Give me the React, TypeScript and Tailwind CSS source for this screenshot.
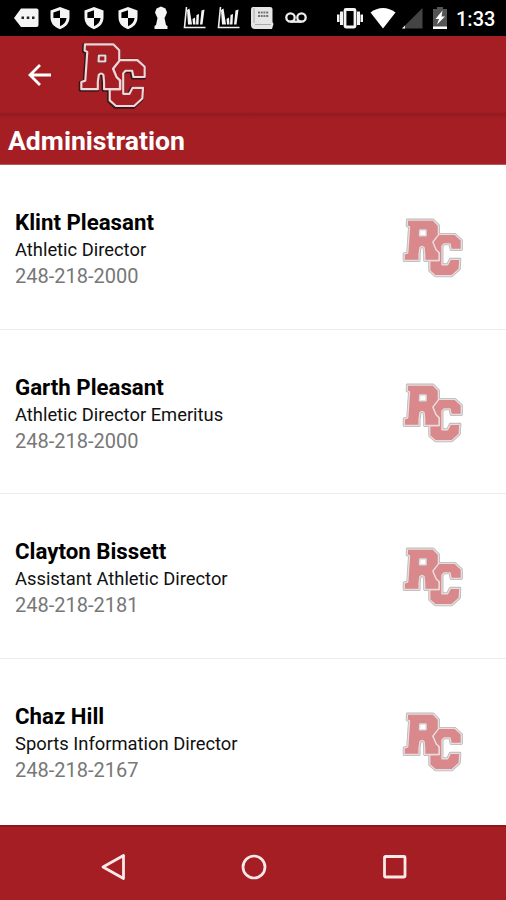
import type { ReactNode } from "react";

const R_PATH =
  "M45 24H131L149 42V74L130 98L141 124L151 134V160H103V140L101 117Q94 108 87 117L84 138V160H34V138L46 134L52 47L44 43Z";
const R_HOLE = "M87 58H107V76H86Z";
const C_PATH =
  "M150 72H204L226 92V123H192L188 104H168L161 112V174H180L189 156H221L219 188L194 211H139L120 194V160H152V134L141 124L130 98Z";

function Logo({ size, fill, line, edge, edgeWidth, lineWidth, dark }: { size: number; fill: string; line: string; edge: string; edgeWidth: number; lineWidth: number; dark?: boolean }) {
  const d = C_PATH + R_PATH;
  return (
    <svg width={size} height={size} viewBox="30 18 200 198" className="block shrink-0 overflow-visible">
      <g strokeLinejoin="round">
        <path d={d} fill={edge} stroke={edge} strokeWidth={edgeWidth} transform={dark ? "translate(-2 2)" : undefined} />
        <path d={C_PATH} fill={fill} stroke={line} strokeWidth={lineWidth} />
        <path d={R_PATH} fill={fill} stroke={line} strokeWidth={lineWidth} />
        <path d={R_HOLE} fill={dark ? fill : "#fff"} stroke={edge} strokeWidth={lineWidth + 3} />
        <path d={R_HOLE} fill={dark ? fill : "#fff"} stroke={line} strokeWidth={lineWidth} />
      </g>
    </svg>
  );
}

function Glyph({ w, className, children }: { w: number; className?: string; children: ReactNode }) {
  return (
    <svg width={w} height={24} viewBox={`0 0 ${w} 24`} className={`shrink-0 ${className ?? ""}`} fill="#f5f5f5">
      {children}
    </svg>
  );
}

function Shield({ className }: { className: string }) {
  return (
    <Glyph w={20} className={className}>
      <path d="M10 1L19.5 4.6V11C19.5 17 16 21.3 10 23.2C4 21.3.5 17 .5 11V4.6Z" />
      <path d="M10 4.2V12H3.4V6.6ZM10 12H16.6C16 16 14 18.700 10 20.200Z" fill="#000" />
    </Glyph>
  );
}

function Chart({ className }: { className: string }) {
  return (
    <Glyph w={23} className={className}>
      <path d="M3.500 1L1.500 21.500H22.500" fill="none" stroke="#eee" strokeWidth="1.600" />
      <path d="M4 4L6.500 2.500L9 18.500H5ZM9.500 13L12 11.500L12.500 18.500H10ZM13.500 9L16 8L15.500 18.500H13ZM18.500 4.500L21.500 3.500L19.500 18.500H17Z" />
    </Glyph>
  );
}

function StatusBar() {
  return (
    <div className="flex h-9 items-center bg-black text-white">
      <Glyph w={25} className="ml-[14px]">
        <path d="M7 2.500H22.500Q24.500 2.500 24.500 4.500V19Q24.500 21 22.500 21H7L0 12Z" />
        <path d="M7.500 10.500H10V13H7.500ZM12.800 10.500H15.300V13H12.800ZM18 10.500H20.500V13H18Z" fill="#222" />
      </Glyph>
      <Shield className="ml-[10.500px]" />
      <Shield className="ml-[14px]" />
      <Shield className="ml-[14px]" />
      <Glyph w={14} className="ml-[16px]">
        <path d="M7 .5L11.500 2.500L13 6.500L11.500 10L10.500 12L12 19L13.500 20V23H.5V20L2 19L3.500 12L2.500 10L1 6.500L2.500 2.500Z" />
      </Glyph>
      <Chart className="ml-[15px]" />
      <Chart className="ml-[11px]" />
      <Glyph w={24} className="ml-[10px]">
        <path d="M3 1H20Q22.500 1 22.500 3V16L23.500 18L22 23H5Q1 23 1 19V4Q1 1 3 1Z" fill="#e5e5e5" />
        <path d="M4 2V17M5 18.500H21" fill="none" stroke="#aaa" />
        <path d="M8 6.500H19M8 10H19" fill="none" stroke="#777" strokeWidth="2" strokeDasharray="2 .7" />
      </Glyph>
      <Glyph w={22} className="ml-[11px]">
        <g fill="none" stroke="#eee" strokeWidth="2.300"><circle cx="5.500" cy="11.500" r="4.200" /><circle cx="16.500" cy="11.500" r="4.200" /><path d="M5.500 15.700H16.500" /></g>
      </Glyph>
      <Glyph w={26} className="ml-[30px]">
        <path d="M0 8.500H2.500V16H0ZM3 5.500H6V19H3ZM20 5.500H23V19H20ZM23.500 8.500H26V16H23.500Z" />
        <rect x="8" y="3.500" width="10" height="17.500" rx="1" fill="none" stroke="#f5f5f5" strokeWidth="2.800" />
      </Glyph>
      <Glyph w={26} className="ml-[7px]">
        <path d="M.5 6.500C8 .5 18 .5 25.500 6.500L13 22.500Z" fill="#fff" />
      </Glyph>
      <Glyph w={22} className="ml-[5px]">
        <path d="M21.500 2V22.500H1Z" fill="#444" /><path d="M4 19.500V22.500H1Z" />
      </Glyph>
      <Glyph w={14} className="ml-[10px]">
        <path d="M4 1H10V3H14V23H0V3H4Z" fill="#555" />
        <path d="M0 20.500H14V23H0ZM9.500 4.500L2.500 13H6L4 18.500L12 10.500H8.500Z" fill="#fff" />
      </Glyph>
      <span className="ml-[9.500px] mt-[2px] text-[20px] font-medium leading-none">1:33</span>
    </div>
  );
}

const people = [
  { name: "Klint Pleasant", role: "Athletic Director", phone: "248-218-2000" },
  { name: "Garth Pleasant", role: "Athletic Director Emeritus", phone: "248-218-2000" },
  { name: "Clayton Bissett", role: "Assistant Athletic Director", phone: "248-218-2181" },
  { name: "Chaz Hill", role: "Sports Information Director", phone: "248-218-2167" },
];

export default function App() {
  return (
    <div className="flex h-[900px] w-[506px] flex-col overflow-hidden bg-white font-['Roboto',sans-serif]">
      <StatusBar />
      <header className="flex h-[79px] shrink-0 items-start bg-[linear-gradient(to_bottom,#a51e23_75px,#901a1f_79px)]">
        <svg width="24" height="24" viewBox="0 0 24 24" className="ml-7 mt-[27px]" fill="none" stroke="#fff" strokeWidth="2.800">
          <path d="M23 12H3M12 2L2 12L12 22" />
        </svg>
        <div className="ml-7 mt-[6px]">
          <Logo size={66} fill="#a51e23" line="#eed7d8" edge="#35171a" edgeWidth={12} lineWidth={6.5} dark />
        </div>
      </header>
      <h1 className="flex h-[50px] shrink-0 items-center border-b border-[#b85a5d] bg-[linear-gradient(to_bottom,#981b20,#a51e23_4px)] pl-2 pt-[4px] text-[26.600px] font-bold leading-none text-white">
        Administration
      </h1>
      <main className="flex h-[660px] shrink-0 flex-col">
        {people.map((p) => (
          <section key={p.name} className="flex h-[164.600px] shrink-0 items-start justify-between border-b border-[#ececec] pl-[15px] pr-[44px] last:border-0">
            <div className="pt-[43px]">
              <h2 className="text-[22.250px] font-bold leading-[28px] text-black">{p.name}</h2>
              <p className="mt-px text-[18.350px] leading-[26px] text-[#111]">{p.role}</p>
              <p className="text-[20px] leading-[27px] text-[#777]">{p.phone}</p>
            </div>
            <div className="mt-[53px]">
              <Logo size={59.5} fill="#d9888c" line="#e9dcdc" edge="#b5b9b9" edgeWidth={10} lineWidth={4.5} />
            </div>
          </section>
        ))}
      </main>
      <nav className="flex h-[75px] shrink-0 items-center border-t-2 border-[#8f161b] bg-[#a51e23] pl-[100px] pt-[6px]">
        <svg width="26" height="28" viewBox="0 0 26 28" fill="none" stroke="#fbe8e8" strokeWidth="2.800" strokeLinejoin="round">
          <path d="M23.500 2.500V25.500L3 14Z" />
        </svg>
        <svg width="26" height="26" viewBox="0 0 26 26" className="ml-[115px]" fill="none" stroke="#fbe8e8" strokeWidth="2.700">
          <circle cx="13" cy="13" r="11" />
        </svg>
        <svg width="26" height="26" viewBox="0 0 26 26" className="ml-[115px]" fill="none" stroke="#fbe8e8" strokeWidth="2.800">
          <rect x="2.500" y="2.500" width="20.500" height="20.500" rx="1" />
        </svg>
      </nav>
    </div>
  );
}
